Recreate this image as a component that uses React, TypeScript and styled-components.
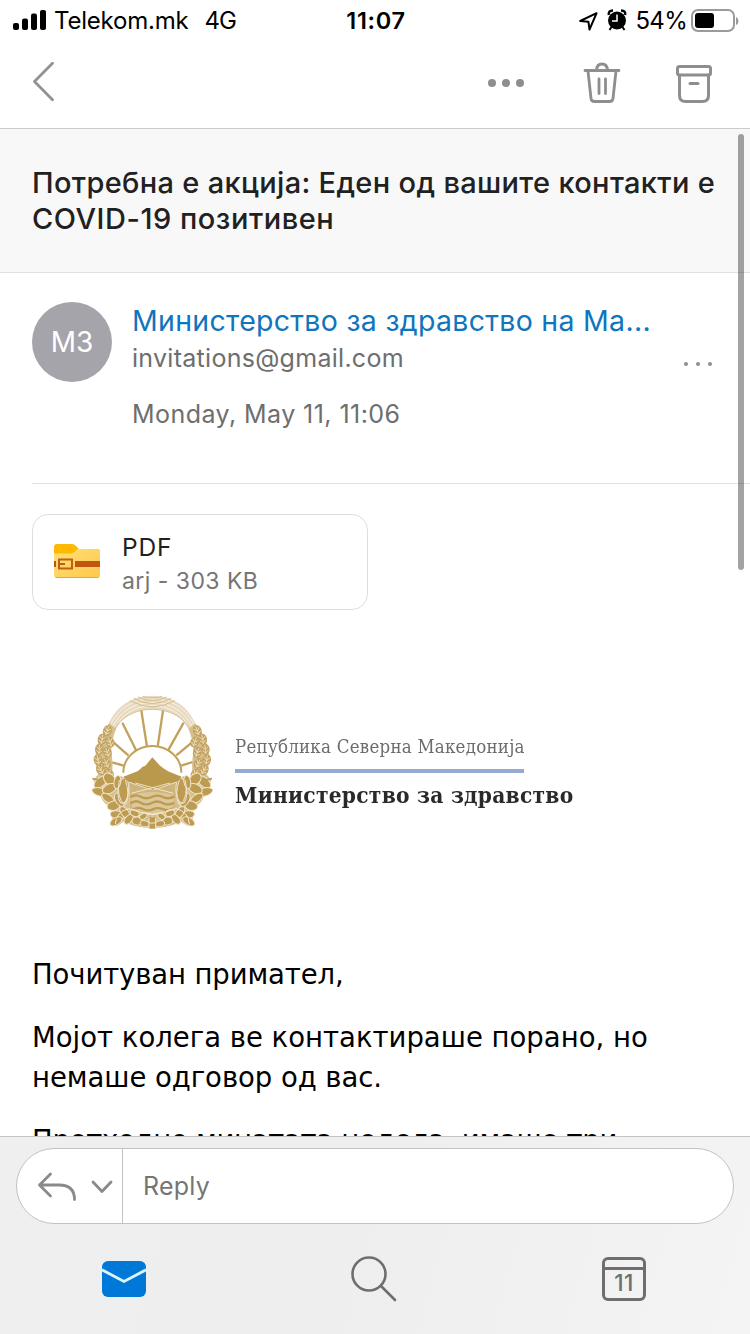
import React from 'react';
import styled, { createGlobalStyle } from 'styled-components';

const GlobalStyle = createGlobalStyle`
  * { box-sizing: border-box; }
  body { margin: 0; background: #fff; }
`;

const Screen = styled.div`
  position: relative;
  width: 750px;
  height: 1334px;
  display: flex;
  flex-direction: column;
  overflow: hidden;
  background: #fff;
  font-family: Inter, 'Liberation Sans', sans-serif;
`;

const Label = styled.span<{ $size: number; $line: number; $color?: string; $weight?: number; $track?: number }>`
  display: block;
  font-size: ${(p) => p.$size}px;
  line-height: ${(p) => p.$line}px;
  color: ${(p) => p.$color ?? '#000'};
  font-weight: ${(p) => p.$weight ?? 400};
  letter-spacing: ${(p) => p.$track ?? 0}px;
  white-space: nowrap;
`;

const StatusBar = styled.header`
  display: grid;
  grid-template-columns: 1fr auto 1fr;
  align-items: center;
  height: 41px;
  padding: 0 11px 0 13px;
`;

const StatusGroup = styled.div<{ $end?: boolean }>`
  display: flex;
  align-items: center;
  justify-content: ${(p) => (p.$end ? 'flex-end' : 'flex-start')};
`;

const Signal = styled.svg`
  margin-right: 8px;
`;

const Network = styled.div`
  margin-left: 16px;
`;

const StatusIcons = styled.svg`
  margin: 0 8px 2px 0;
`;

const Toolbar = styled.nav`
  display: flex;
  align-items: center;
  height: 88px;
  padding: 0 38px 3px 32px;
  border-bottom: 1px solid #cbcbcb;
`;

const ToolbarActions = styled.div`
  display: flex;
  align-items: center;
  margin-left: auto;
`;

const ToolbarButton = styled.svg<{ $gap?: number }>`
  margin-right: ${(p) => p.$gap ?? 0}px;
`;

const Subject = styled.section`
  height: 144px;
  padding: 36px 32px 0;
  background: #f8f8f8;
  border-bottom: 1px solid #e1e1e1;
`;

const Sender = styled.section`
  display: flex;
  height: 211px;
  margin-left: 32px;
  padding: 29px 36px 0 0;
  border-bottom: 1px solid #e1e1e1;
`;

const Avatar = styled.div`
  display: flex;
  align-items: center;
  justify-content: center;
  width: 80px;
  height: 80px;
  border-radius: 50%;
  background: #a5a4aa;
`;

const SenderText = styled.div`
  flex: 1;
  margin-left: 20px;
`;

const DateLine = styled.div`
  margin-top: 20px;
`;

const MoreButton = styled.svg`
  margin-top: 59px;
`;

const Message = styled.main`
  flex: 1;
  min-height: 0;
  overflow: hidden;
  padding: 30px 32px 0;
`;

const Attachment = styled.div`
  display: flex;
  align-items: center;
  width: 336px;
  height: 96px;
  padding-left: 20px;
  border: 1px solid #dedede;
  border-radius: 16px;
`;

const FolderIcon = styled.svg`
  margin-bottom: 2px;
`;

const AttachmentText = styled.div`
  margin: 4px 0 0 21px;
`;

const Letterhead = styled.div`
  display: flex;
  height: 160px;
  margin: 70px 0 0 48px;
`;

const LetterheadText = styled.div`
  display: flex;
  flex-direction: column;
  margin: 53px 0 0 5px;
  font-family: 'DejaVu Serif', serif;
  font-stretch: condensed;
  filter: blur(0.6px);
`;

const Rule = styled.div`
  width: 289px;
  height: 4px;
  margin: 9px 0 6px;
  background: #96a9d2;
`;

const EmblemArt = styled.svg`
  filter: blur(0.6px);
`;

const Body = styled.div`
  margin-top: 114px;
  font-family: Verdana, 'DejaVu Sans', sans-serif;
`;

const Paragraph = styled.p`
  margin: 0 0 23px;
`;

const Footer = styled.footer`
  height: 198px;
  padding: 11px 16px 0;
  border-top: 1px solid #c4c4c5;
  background: linear-gradient(105deg, #efefef 0%, #eeeeee 45%, #f4f4f4 100%);
`;

const ReplyBox = styled.div`
  display: flex;
  height: 76px;
  border: 1px solid #c2c2c2;
  border-radius: 38px;
  background: #fff;
  overflow: hidden;
`;

const ReplyMode = styled.div`
  display: flex;
  align-items: center;
  width: 106px;
  padding: 2px 0 0 20px;
  gap: 14px;
  border-right: 1px solid #c2c2c2;
`;

const ReplyField = styled.div`
  display: flex;
  align-items: center;
  padding-left: 20px;
`;

const Tabs = styled.div`
  display: flex;
  justify-content: space-between;
  align-items: center;
  height: 110px;
  padding: 0 88px 0 86px;
`;

const CalendarIcon = styled.div`
  display: flex;
  flex-direction: column;
  align-items: center;
  width: 44px;
  height: 44px;
  border: 3px solid #6e6e6e;
  border-radius: 6px;
`;

const CalendarHead = styled.div`
  width: 100%;
  height: 10px;
  border-bottom: 3px solid #6e6e6e;
`;

const ScrollThumb = styled.div`
  position: absolute;
  top: 134px;
  left: 738px;
  width: 6px;
  height: 436px;
  border-radius: 3px;
  background: rgba(0, 0, 0, 0.36);
`;

const rays = [
  [184, 92, 201, 200], [249, 92, 233, 200], [127, 128, 169, 212], [311, 128, 264, 212],
  [97, 184, 145, 226], [336, 187, 289, 226], [96, 247, 131, 257], [338, 246, 304, 257],
];

const leaves = [
  [82, 152, 20], [66, 178, 10], [90, 186, -20], [58, 208, 5], [82, 217, -20],
  [54, 240, -10], [79, 250, -25], [62, 270, -30], [88, 282, -35],
];

const florets = [
  [62, 306, -40, 24, 13], [88, 297, 45, 20, 15], [60, 336, 15, 24, 12], [88, 326, -25, 22, 14],
  [84, 355, 35, 22, 11], [101, 377, -15, 20, 14], [119, 359, 60, 22, 13], [130, 332, 95, 38, 16],
  [112, 306, 100, 20, 10], [112, 405, 10, 22, 12], [108, 424, -30, 20, 11], [134, 397, 55, 20, 11],
  [146, 418, -50, 17, 10], [164, 399, 25, 14, 10], [171, 423, 5, 15, 12], [190, 409, -30, 12, 8],
  [194, 431, 10, 14, 9],
];

const WreathHalf = () => (
  <g>
    <path
      d="M88 130Q50 180 46 228Q48 270 56 282L40 300L50 320L42 330L62 348Q70 372 86 376L100 400L92 428L112 438L132 424Q160 444 217 444V404Q168 402 150 380L146 300L122 288L104 300L96 282Q100 250 94 220Q92 180 108 146Z"
      fill="#d6bf8c"
    />
    {leaves.map(([x, y, a], i) => (
      <g key={i} transform={`translate(${x} ${y}) rotate(${a})`}>
        <ellipse rx="13" ry="17" fill="#c3a360" />
        <path d="M0-14V14M-9-8L0 1L9-8M-9 3L0 11L9 3" fill="none" stroke="#ecdfc2" strokeWidth="2.5" />
      </g>
    ))}
    {florets.map(([x, y, a, rx, ry], i) => (
      <g key={i} transform={`translate(${x} ${y}) rotate(${a})`}>
        <ellipse rx={rx} ry={ry} fill="#bd9b50" stroke="#efe4cb" strokeWidth="3" />
      </g>
    ))}
    <path d="M106 432Q108 395 146 386Q181 400 215 402" fill="none" stroke="#f4ead6" strokeWidth="3" />
    <path d="M118 300Q108 350 134 376M136 300Q150 340 138 372" fill="none" stroke="#efe4cb" strokeWidth="3" />
  </g>
);

const Emblem = () => (
  <EmblemArt width="150" height="160" viewBox="0 0 450 480">
    <path d="M75 165C91 89 148 47 217 47S341 89 357 165L333 174C326 122 280 87 217 87S108 122 101 174Z" fill="#e8dac0" />
    <g fill="none" stroke="#f9f3e7" strokeWidth="3">
      <path d="M85 151C105 93 151 57 217 57S329 93 349 151" />
      <path d="M91 157C110 103 155 67 217 67S324 103 343 157" />
      <path d="M98 162C115 112 158 77 217 77S319 112 336 162" />
    </g>
    <g fill="none" stroke="#d3bd8c" strokeWidth="3">
      <path d="M161 55Q217 86 273 55M174 51Q217 72 260 51M188 49Q217 59 246 49M150 62Q217 99 284 62" />
      <path d="M94 173C107 123 153 88 217 88S327 123 340 173" />
    </g>
    <g stroke="#c2a15a" strokeWidth="7">
      {rays.map(([x1, y1, x2, y2], i) => <path key={i} d={`M${x1} ${y1}L${x2} ${y2}`} />)}
    </g>
    <path d="M130 278A87 80 0 0 1 304 278" fill="none" stroke="#c2a15a" strokeWidth="6" />
    <path d="M147 304L218 331L291 304L285 400H150Z" fill="#cfb57c" />
    <path d="M151 348Q217 324 285 348L279 380Q247 402 217 402T155 380Z" fill="#dcc79b" />
    <g fill="none" stroke="#bd9b50" strokeWidth="7">
      <path d="M151 352Q166 341 182 350T215 351T248 351T284 350" />
      <path d="M151 371Q166 358 182 368T215 369T248 369T282 368" />
      <path d="M160 389Q172 379 188 387T218 388T248 387T275 388" />
    </g>
    <WreathHalf />
    <g transform="translate(434 0) scale(-1 1)"><WreathHalf /></g>
    <path d="M130 290L174 273L188 260L196 257L217 232L238 255L249 264L264 274L305 290L291 306L218 334L145 306Z" fill="#b99a4d" />
    <path d="M146 306L218 331L290 306M154 340L270 309M280 340L166 309" stroke="#efe4c9" strokeWidth="3" fill="none" />
    <path d="M207 412H227V446H207Z" fill="#bd9b50" />
    <path d="M207 414V446M227 414V446M207 429H227" stroke="#efe4cb" strokeWidth="3" />
    <g fill="none" stroke="#bd9b50" strokeWidth="5">
      <path d="M37 296L58 300M37 329L62 339M396 296L376 300M397 329L372 339" />
    </g>
  </EmblemArt>
);

export default function App() {
  return (
    <Screen>
      <GlobalStyle />
      <StatusBar>
        <StatusGroup>
          <Signal width="33" height="22" viewBox="0 0 33 22">
            <rect x="0" y="13" width="6" height="7" rx="2" />
            <rect x="9" y="8.500" width="6" height="11.500" rx="2" />
            <rect x="18" y="3.500" width="6" height="16.500" rx="2" />
            <rect x="27" y="0" width="6" height="20" rx="2" />
          </Signal>
          <Label $size={24} $line={41} $track={-0.2}>Telekom.mk</Label>
          <Network><Label $size={24} $line={41} $track={-1}>4G</Label></Network>
        </StatusGroup>
        <Label $size={23.5} $line={41} $weight={600} $track={0.7}>11:07</Label>
        <StatusGroup $end>
          <StatusIcons width="48" height="24" viewBox="0 0 48 24">
            <path d="M1.2 13L17.600 5.200L10.500 21.500L9.400 13.700Z" fill="none" stroke="#000" strokeWidth="2" strokeLinejoin="round" />
            <circle cx="38" cy="12.500" r="9" />
            <path d="M29.800 7Q29 2.500 34 2.500M46.200 7Q47 2.500 42 2.500" fill="none" stroke="#000" strokeWidth="2.400" />
            <path d="M32.500 19L30.500 22M43.500 19L45.500 22" stroke="#000" strokeWidth="2" />
            <path d="M38 6.500V13H33" fill="none" stroke="#fff" strokeWidth="1.500" />
          </StatusIcons>
          <Label $size={24} $line={41} $track={-0.7}>54%</Label>
          <svg width="49" height="24" viewBox="0 0 49 24">
            <rect x="5" y="1" width="42" height="21" rx="6" fill="none" stroke="#9b9b9b" strokeWidth="2" />
            <rect x="8" y="4" width="19" height="15" rx="3" />
          </svg>
          <svg width="3" height="8" viewBox="0 0 3 8"><path d="M0 0Q2.500 1 2.500 4T0 8Z" fill="#9b9b9b" /></svg>
        </StatusGroup>
      </StatusBar>

      <Toolbar>
        <svg width="24" height="42" viewBox="0 0 24 42" fill="none" stroke="#929292" strokeWidth="2.8" strokeLinecap="round" strokeLinejoin="round">
          <path d="M20.500 1.200L2.500 19.500L20.500 37.800" />
        </svg>
        <ToolbarActions>
          <ToolbarButton $gap={58} width="38" height="12" viewBox="0 0 38 12" fill="#8e8e8e">
            <circle cx="5" cy="6" r="4" />
            <circle cx="19" cy="6" r="4" />
            <circle cx="33" cy="6" r="4" />
          </ToolbarButton>
          <ToolbarButton $gap={55} width="38" height="42" viewBox="0 0 38 42" fill="none" stroke="#8e8e8e" strokeWidth="2.800" strokeLinecap="round" strokeLinejoin="round">
            <path d="M2 8.500H36M13.500 8Q14 2 19 2T24.500 8M5 9L8 36.500Q8.400 39.500 11.500 39.500H26.500Q29.600 39.500 30 36.500L33 9M16 17V31.500M22.500 17V31.500" />
          </ToolbarButton>
          <ToolbarButton width="36" height="42" viewBox="0 0 36 42" fill="none" stroke="#8e8e8e" strokeWidth="3" strokeLinecap="round" strokeLinejoin="round">
            <rect x="1.500" y="4.500" width="33" height="8.500" rx="2" />
            <path d="M3.500 13V33.500Q3.500 39.500 9.500 39.500H26.500Q32.500 39.500 32.500 33.500V13M14 21.500H22" />
          </ToolbarButton>
        </ToolbarActions>
      </Toolbar>

      <Subject>
        <Label $size={29} $line={36} $color="#212121" $weight={500} $track={0.33}>Потребна е акција: Еден од вашите контакти е</Label>
        <Label $size={29} $line={36} $color="#212121" $weight={500} $track={0.52}>COVID-19 позитивен</Label>
      </Subject>

      <Sender>
        <Avatar><Label $size={28} $line={80} $color="#fff">МЗ</Label></Avatar>
        <SenderText>
          <Label $size={28.5} $line={38} $color="#0f75bd" $track={0.29}>Министерство за здравство на Ма...</Label>
          <Label $size={25} $line={36} $color="#6e6e6e" $track={0.28}>invitations@gmail.com</Label>
          <DateLine><Label $size={25} $line={36} $color="#6e6e6e" $track={0.44}>Monday, May 11, 11:06</Label></DateLine>
        </SenderText>
        <MoreButton width="32" height="6" viewBox="0 0 32 6" fill="#8e8e8e">
          <circle cx="4" cy="3" r="2" /><circle cx="16" cy="3" r="2" /><circle cx="28" cy="3" r="2" />
        </MoreButton>
      </Sender>

      <Message>
        <Attachment>
          <FolderIcon width="48" height="36" viewBox="0 0 48 36">
            <defs>
              <linearGradient id="folder" x1="0" y1="0" x2="1" y2="1">
                <stop offset="0" stopColor="#ffdf78" /><stop offset="1" stopColor="#ffc94a" />
              </linearGradient>
            </defs>
            <path d="M1 4Q1 1 4 1H19Q21 1 23 3L26 6H44Q47 6 47 9V20H1Z" fill="#ffb900" />
            <path d="M1 10.500H18Q20 10.500 22 8.500L24.500 6H44Q47 6 47 9V32Q47 35 44 35H4Q1 35 1 32Z" fill="url(#folder)" />
            <path d="M2 34Q3 35 4 35H44Q45 35 46 34Z" fill="#e8a33b" />
            <rect x="1" y="18" width="2" height="6" fill="#bf5712" />
            <rect x="22" y="18" width="25" height="6" fill="#bf5712" />
            <path d="M6 16.500H19V25.500H6ZM6 21H12" fill="none" stroke="#bf5f14" strokeWidth="2" />
          </FolderIcon>
          <AttachmentText>
            <Label $size={24.5} $line={34} $color="#212121" $track={0.8}>PDF</Label>
            <Label $size={23} $line={34} $color="#757575" $track={0.45}>arj - 303 KB</Label>
          </AttachmentText>
        </Attachment>
        <Letterhead>
          <Emblem />
          <LetterheadText>
            <Label $size={18.5} $line={27} $color="#6c6c6c" $track={0.25}>Република Северна Македонија</Label>
            <Rule />
            <Label $size={22.5} $line={32} $color="#2a2a2a" $weight={700} $track={0.26}>Министерство за здравство</Label>
          </LetterheadText>
        </Letterhead>
        <Body>
          <Paragraph><Label $size={27.5} $line={40} $track={-0.12}>Почитуван примател,</Label></Paragraph>
          <Paragraph>
            <Label $size={27.5} $line={40}>Мојот колега ве контактираше порано, но</Label>
            <Label $size={27.5} $line={40} $track={-0.05}>немаше одговор од вас.</Label>
          </Paragraph>
          <Paragraph><Label $size={27.5} $line={40} $track={-0.28}>Претходно минатата недела, имаше три</Label></Paragraph>
        </Body>
      </Message>

      <Footer>
        <ReplyBox>
          <ReplyMode>
            <svg width="40" height="30" viewBox="0 0 40 30" fill="none" stroke="#8a8a8a" strokeWidth="2.800" strokeLinecap="round" strokeLinejoin="round">
              <path d="M13.500 2L2.500 13L13.500 24M2.500 13H22Q37.500 13 37.500 27.500" />
            </svg>
            <svg width="22" height="14" viewBox="0 0 22 14" fill="none" stroke="#8a8a8a" strokeWidth="2.800" strokeLinecap="round" strokeLinejoin="round">
              <path d="M2 2L11 11.500L20 2" />
            </svg>
          </ReplyMode>
          <ReplyField><Label $size={25} $line={74} $color="#757575" $track={0.25}>Reply</Label></ReplyField>
        </ReplyBox>
        <Tabs>
          <svg width="44" height="36" viewBox="0 0 44 36">
            <rect width="44" height="36" rx="6" fill="#0078d7" />
            <path d="M0 8.800L22 20.500L44 8.800" fill="none" stroke="#dcf5fb" strokeWidth="2.800" />
          </svg>
          <svg width="46" height="46" viewBox="0 0 46 46" fill="none" stroke="#6e6e6e" strokeWidth="2.600" strokeLinecap="round">
            <circle cx="18" cy="18" r="16.500" /><path d="M30 30L44 44" />
          </svg>
          <CalendarIcon>
            <CalendarHead />
            <Label $size={22.5} $line={26} $color="#6e6e6e" $weight={500} $track={0.3}>11</Label>
          </CalendarIcon>
        </Tabs>
      </Footer>
      <ScrollThumb />
    </Screen>
  );
}
